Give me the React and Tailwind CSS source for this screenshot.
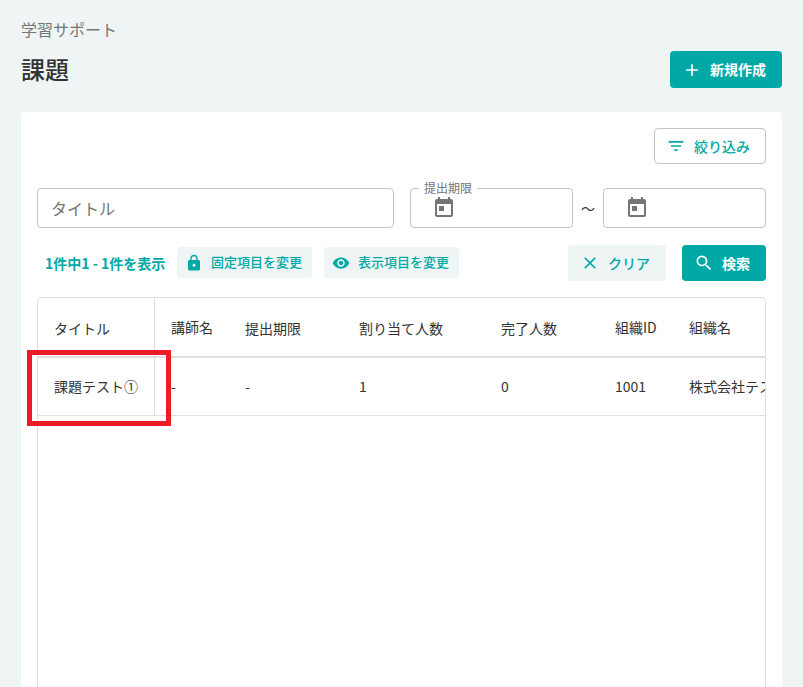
import React from 'react';
import { MdAdd, MdClose, MdFilterList, MdLock, MdSearch, MdVisibility } from 'react-icons/md';

const columns = [
    { label: '講師名', value: '-', width: 'w-[74px]', sortable: false },
    { label: '提出期限', value: '-', width: 'w-[114px]', sortable: true },
    { label: '割り当て人数', value: '1', width: 'w-[142px]', sortable: true },
    { label: '完了人数', value: '0', width: 'w-[114px]', sortable: true },
    { label: '組織ID', value: '1001', width: 'w-[74px]', sortable: false },
    { label: '組織名', value: '株式会社テスト', width: 'w-[140px]', sortable: false },
];

const CalendarIcon = () => (
    <svg width="24" height="24" viewBox="0 0 24 24" fill="currentColor">
        <path d="M19 3h-1V1h-2v2H8V1H6v2H5c-1.11 0-1.99.9-1.99 2L3 19c0 1.1.89 2 2 2h14c1.1 0 2-.9 2-2V5c0-1.1-.9-2-2-2zm0 16H5V8h14v11zM7 10h5v5H7z" />
    </svg>
);

const DateField = ({ label }) => (
    <div className="relative flex h-10 w-[163px] shrink-0 items-start rounded border border-[#c4c4c4] pl-[21px] pt-[7px] text-[#757575]">
        {label && (
            <span className="absolute -top-[10px] left-[8px] bg-white px-[5px] text-xs leading-[18px]">{label}</span>
        )}
        <CalendarIcon />
    </div>
);

const App = () => {
    return (
        <div className="h-[687px] w-[803px] overflow-hidden bg-[#eff5f5] px-[21px] font-['Noto_Sans_CJK_JP',sans-serif] text-sm text-[#333]">
            {/* Page header */}
            <header className="h-28 pt-[17px]">
                <p className="text-base leading-6 text-[#757575]">学習サポート</p>
                <div className="mt-[10px] flex items-start justify-between">
                    <h1 className="text-2xl font-medium leading-[36px]">課題</h1>
                    <button className="flex h-[37px] w-28 items-center rounded bg-[#00a9a5] pl-3 font-bold text-white">
                        <MdAdd size={20} />
                        <span className="ml-2 pb-0.5">新規作成</span>
                    </button>
                </div>
            </header>

            <main className="flex h-[600px] flex-col rounded-t bg-white px-4 pt-4">
                <div className="flex justify-end">
                    <button className="flex h-9 w-28 items-center rounded border border-[#c4c4c4] pl-[11px] font-medium text-[#00a9a5]">
                        <MdFilterList size={20} />
                        <span className="ml-2">絞り込み</span>
                    </button>
                </div>

                {/* Search fields */}
                <div className="mt-6 flex">
                    <div className="flex h-10 w-[357px] items-center rounded border border-[#c4c4c4] pl-[13px] text-base text-[#757575]">
                        タイトル
                    </div>
                    <div className="ml-4 flex items-center">
                        <DateField label="提出期限" />
                        <span className="w-[30px] text-center">～</span>
                        <DateField />
                    </div>
                </div>

                {/* Toolbar */}
                <div className="mt-[17px] flex h-9 items-center text-[#00a9a5]">
                    <span className="ml-2 w-[132px] whitespace-nowrap font-bold">1件中1 - 1件を表示</span>
                    <button className="mb-[2px] flex h-[31px] w-[135px] items-center rounded bg-[#eff5f5] pl-2 text-[13px] font-medium">
                        <MdLock size={18} className="mt-px" />
                        <span className="ml-2">固定項目を変更</span>
                    </button>
                    <button className="mb-[2px] ml-3 flex h-[31px] w-[135px] items-center rounded bg-[#eff5f5] pl-2 text-[13px] font-medium">
                        <MdVisibility size={18} className="mt-px" />
                        <span className="ml-2">表示項目を変更</span>
                    </button>
                    <button className="ml-auto flex h-9 w-[98px] items-center rounded bg-[#eff5f5] pl-3 font-medium">
                        <MdClose size={20} />
                        <span className="ml-2">クリア</span>
                    </button>
                    <button className="ml-4 flex h-9 w-[84px] items-center rounded bg-[#00a9a5] pl-3 font-bold text-white">
                        <MdSearch size={20} />
                        <span className="ml-2">検索</span>
                    </button>
                </div>

                {/* Table */}
                <div className="relative mt-4 flex-1 rounded-t border border-[#e0e0e0]">
                    <div className="overflow-hidden">
                        <div className="flex h-[60px] items-center border-b-2 border-[#e0e0e0]">
                            <div className="flex h-full w-[117px] shrink-0 items-center border-r border-[#e0e0e0] pl-4 pt-0.5">タイトル</div>
                            {columns.map((col) => (
                                <div key={col.label} className={`shrink-0 whitespace-nowrap pl-4 ${col.width} ${col.sortable ? 'pt-0.5' : ''}`}>
                                    {col.label}
                                </div>
                            ))}
                        </div>
                        <div className="flex h-[58px] items-center border-b border-[#e0e0e0]">
                            <div className="flex h-full w-[117px] shrink-0 items-center border-r border-[#e0e0e0] pb-0.5 pl-4">課題テスト①</div>
                            {columns.map((col) => (
                                <div key={col.label} className={`shrink-0 whitespace-nowrap pb-0.5 pl-4 ${col.width}`}>
                                    {col.value}
                                </div>
                            ))}
                        </div>
                    </div>
                    {/* Highlight around the first row title */}
                    <div className="absolute -left-[11px] top-[52px] h-[76px] w-36 border-5 border-[#ed1c24]" />
                </div>
            </main>
        </div>
    );
};

export default App;
